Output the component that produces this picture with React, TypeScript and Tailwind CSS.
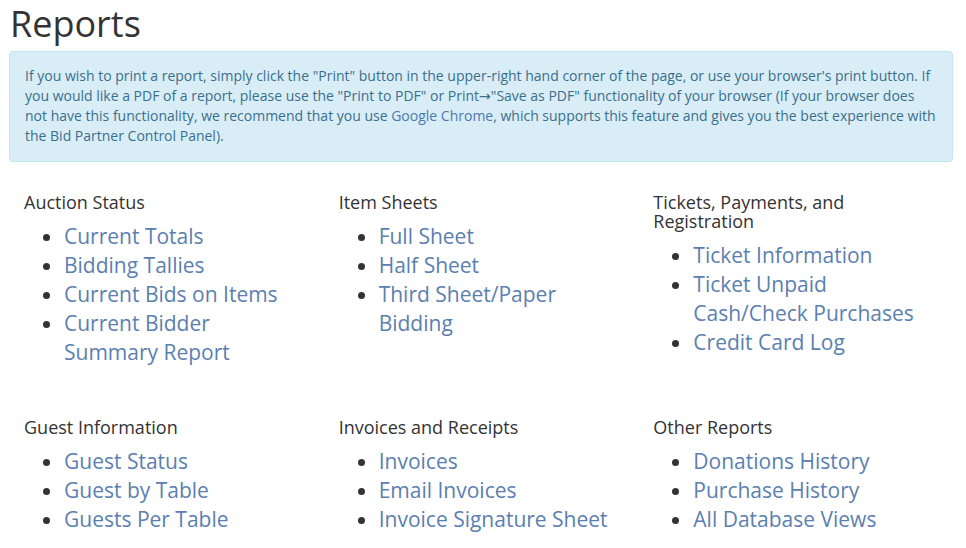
const sections = [
  {
    title: "Auction Status",
    links: ["Current Totals", "Bidding Tallies", "Current Bids on Items", "Current Bidder Summary Report"],
  },
  {
    title: "Item Sheets",
    links: ["Full Sheet", "Half Sheet", "Third Sheet/Paper Bidding"],
  },
  {
    title: "Tickets, Payments, and Registration",
    links: ["Ticket Information", "Ticket Unpaid Cash/Check Purchases", "Credit Card Log"],
  },
  {
    title: "Guest Information",
    links: ["Guest Status", "Guest by Table", "Guests Per Table"],
  },
  {
    title: "Invoices and Receipts",
    links: ["Invoices", "Email Invoices", "Invoice Signature Sheet"],
  },
  {
    title: "Other Reports",
    links: ["Donations History", "Purchase History", "All Database Views"],
  },
];

const Section = ({ title, links }: { title: string; links: string[] }) => (
  <div className="px-[15px]">
    <h4 className="text-[18px] leading-[19px] text-[#333]">{title}</h4>
    <ul className="mt-[10px] list-disc pl-[40px] text-[21px] leading-[29px] text-[#333]">
      {links.map((l) => (
        <li key={l}>
          <a href="#" className="text-[#5b80b0]">
            {l}
          </a>
        </li>
      ))}
    </ul>
  </div>
);

export default function App() {
  return (
    <div
      className="h-[548px] w-[966px] overflow-hidden bg-white px-[9px] text-[#333]"
      style={{ fontFamily: '"Open Sans", sans-serif' }}
    >
      <h1 className="pl-[1px] pt-[2px] text-[36px] leading-[44px] text-[#333]">Reports</h1>
      <div className="mt-[5px] w-[944px] rounded-[4px] border border-[#bce8f1] bg-[#d9edf7] px-[15px] pb-[15px] pt-[14px] text-[14px] leading-[20px] text-[#3a6f8d]">
        If you wish to print a report, simply click the "Print" button in the upper-right hand corner of the page, or
        use your browser's print button. If you would like a PDF of a report, please use the "Print to PDF" or Print
        <span className="font-['DejaVu_Sans',sans-serif]">→</span>"Save as PDF" functionality of your browser (If
        your browser does not have this functionality, we recommend that you use{" "}
        <a href="#" className="text-[#4d78b0]">
          Google Chrome
        </a>
        , which supports this feature and gives you the best experience with the Bid Partner Control Panel).
      </div>
      <div className="mt-[31px] grid w-[944px] grid-cols-3 gap-y-[51px]">
        {sections.map((s) => (
          <Section key={s.title} title={s.title} links={s.links} />
        ))}
      </div>
    </div>
  );
}
